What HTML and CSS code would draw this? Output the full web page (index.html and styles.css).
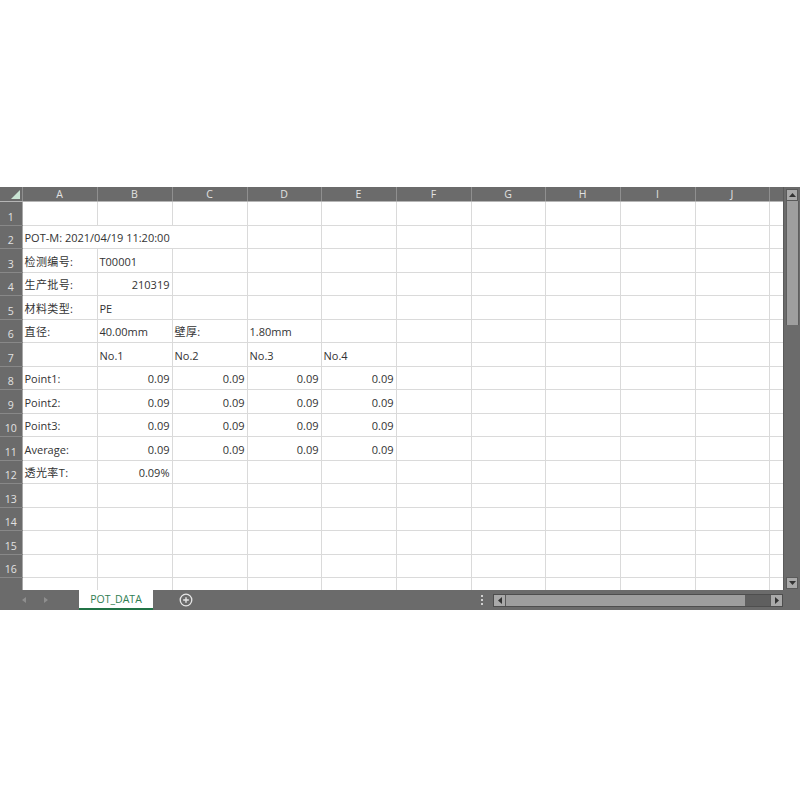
FILE: index.html
```html
<!DOCTYPE html>
<html>
<head>
<meta charset="utf-8">
<link rel="stylesheet" href="styles.css">
</head>
<body>
<div class="app">
  <div class="main">
    <div class="grid-wrap">
      <table class="sheet">
        <colgroup>
          <col class="c-rh"><col class="c75"><col class="c75"><col class="c75"><col class="c74"><col class="c75"><col class="c75"><col class="c74"><col class="c75"><col class="c75"><col class="c74"><col class="c-last">
        </colgroup>
        <thead>
          <tr class="hdr">
            <th class="corner"><svg class="tri" width="9" height="9" viewBox="0 0 9 9"><polygon points="9,0 9,9 0,9" fill="#c9e4d3"/></svg></th>
            <th>A</th><th>B</th><th>C</th><th>D</th><th>E</th><th>F</th><th>G</th><th>H</th><th>I</th><th>J</th><th></th>
          </tr>
        </thead>
        <tbody>
          <tr><th>1</th><td></td><td></td><td></td><td></td><td></td><td></td><td></td><td></td><td></td><td></td><td></td></tr>
          <tr><th>2</th><td class="over">POT-M: 2021/04/19 11:20:00</td><td class="over"></td><td></td><td></td><td></td><td></td><td></td><td></td><td></td><td></td><td></td></tr>
          <tr><th>3</th><td class="cjk">检测编号:</td><td>T00001</td><td></td><td></td><td></td><td></td><td></td><td></td><td></td><td></td><td></td></tr>
          <tr><th>4</th><td class="cjk">生产批号:</td><td class="r">210319</td><td></td><td></td><td></td><td></td><td></td><td></td><td></td><td></td><td></td></tr>
          <tr><th>5</th><td class="cjk">材料类型:</td><td>PE</td><td></td><td></td><td></td><td></td><td></td><td></td><td></td><td></td><td></td></tr>
          <tr><th>6</th><td class="cjk">直径:</td><td>40.00mm</td><td class="cjk">壁厚:</td><td>1.80mm</td><td></td><td></td><td></td><td></td><td></td><td></td><td></td></tr>
          <tr><th>7</th><td></td><td>No.1</td><td>No.2</td><td>No.3</td><td>No.4</td><td></td><td></td><td></td><td></td><td></td><td></td></tr>
          <tr><th>8</th><td>Point1:</td><td class="r">0.09</td><td class="r">0.09</td><td class="r">0.09</td><td class="r">0.09</td><td></td><td></td><td></td><td></td><td></td><td></td></tr>
          <tr><th>9</th><td>Point2:</td><td class="r">0.09</td><td class="r">0.09</td><td class="r">0.09</td><td class="r">0.09</td><td></td><td></td><td></td><td></td><td></td><td></td></tr>
          <tr><th>10</th><td>Point3:</td><td class="r">0.09</td><td class="r">0.09</td><td class="r">0.09</td><td class="r">0.09</td><td></td><td></td><td></td><td></td><td></td><td></td></tr>
          <tr><th>11</th><td>Average:</td><td class="r">0.09</td><td class="r">0.09</td><td class="r">0.09</td><td class="r">0.09</td><td></td><td></td><td></td><td></td><td></td><td></td></tr>
          <tr><th>12</th><td class="cjk">透光率T:</td><td class="r">0.09%</td><td></td><td></td><td></td><td></td><td></td><td></td><td></td><td></td><td></td></tr>
          <tr><th>13</th><td></td><td></td><td></td><td></td><td></td><td></td><td></td><td></td><td></td><td></td><td></td></tr>
          <tr><th>14</th><td></td><td></td><td></td><td></td><td></td><td></td><td></td><td></td><td></td><td></td><td></td></tr>
          <tr><th>15</th><td></td><td></td><td></td><td></td><td></td><td></td><td></td><td></td><td></td><td></td><td></td></tr>
          <tr><th>16</th><td></td><td></td><td></td><td></td><td></td><td></td><td></td><td></td><td></td><td></td><td></td></tr>
          <tr><th></th><td></td><td></td><td></td><td></td><td></td><td></td><td></td><td></td><td></td><td></td><td></td></tr>
        </tbody>
      </table>
    </div>
    <div class="vscroll">
      <div class="sbtn"><svg width="7" height="4" viewBox="0 0 7 4"><polygon points="3.5,0 7,4 0,4" fill="#333"/></svg></div>
      <div class="vthumb"></div>
      <div class="vspace"></div>
      <div class="sbtn"><svg width="7" height="4" viewBox="0 0 7 4"><polygon points="0,0 7,0 3.5,4" fill="#333"/></svg></div>
    </div>
  </div>
  <div class="tabbar">
    <div class="nav">
      <svg class="arr" width="4" height="6" viewBox="0 0 4 6"><polygon points="4,0 4,6 0,3" fill="#8e8e8e"/></svg>
      <svg class="arr" width="4" height="6" viewBox="0 0 4 6"><polygon points="0,0 4,3 0,6" fill="#8e8e8e"/></svg>
    </div>
    <div class="tab">POT_DATA</div>
    <div class="add">
      <svg width="14" height="14" viewBox="0 0 14 14"><circle cx="7" cy="7" r="5.8" fill="none" stroke="#e6e6e6" stroke-width="1.3"/><path d="M7 4.2V9.8M4.2 7H9.8" stroke="#e6e6e6" stroke-width="1.4"/></svg>
    </div>
    <div class="fill"></div>
    <div class="dots"><span></span><span></span><span></span></div>
    <div class="hscroll">
      <div class="hbtn"><svg width="4" height="7" viewBox="0 0 4 7"><polygon points="4,0 4,7 0,3.5" fill="#333"/></svg></div>
      <div class="hthumb"></div>
      <div class="hspace"></div>
      <div class="hbtn"><svg width="4" height="7" viewBox="0 0 4 7"><polygon points="0,0 4,3.5 0,7" fill="#333"/></svg></div>
    </div>
  </div>
</div>
</body>
</html>
```

FILE: styles.css
```css
html, body {
  margin: 0;
  padding: 0;
  background: #ffffff;
}

.app {
  margin-top: 187px;
  width: 800px;
  font-family: "Open Sans", "Noto Sans CJK SC", sans-serif;
}

.main {
  display: flex;
  height: 403px;
  background: #6b6b6b;
}

.grid-wrap {
  width: 783px;
  height: 403px;
  overflow: hidden;
  background: #ffffff;
}

.sheet {
  border-collapse: collapse;
  table-layout: fixed;
  width: 783px;
}

.c-rh { width: 22px; }
.c75 { width: 75px; }
.c74 { width: 74px; }
.c-last { width: 14px; }

.sheet td {
  border-right: 1px solid #dadada;
  border-bottom: 1px solid #dadada;
  padding: 0 2px 3px 2px;
  vertical-align: bottom;
  white-space: nowrap;
  overflow: visible;
  font-size: 11px;
  line-height: 14px;
  color: #333333;
}

.sheet td.r { text-align: right; }
.sheet td.cjk { font-size: 11px; letter-spacing: 0.4px; }
.sheet td.over { border-right-color: #ffffff; }

.sheet tbody tr:nth-child(odd) { height: 24px; }
.sheet tbody tr:nth-child(even) { height: 23px; }

.sheet th {
  background: #6b6b6b;
  color: #e2e2e2;
  font-weight: normal;
  font-size: 10.5px;
  padding: 0;
}

.sheet thead th {
  height: 14px;
  line-height: 13px;
  text-align: center;
  border-right: 1px solid #8f8f8f;
  border-bottom: 1px solid #b5b5b5;
}

.sheet tbody th {
  text-align: center;
  vertical-align: bottom;
  padding-bottom: 1px;
  line-height: 13px;
  border-right: 1px solid #a8a8a8;
  border-bottom: 1px solid #888888;
}

.sheet th.corner {
  position: relative;
}

.tri {
  position: absolute;
  right: 2px;
  bottom: 2px;
}

.vscroll {
  width: 17px;
  display: flex;
  flex-direction: column;
  align-items: center;
  padding: 2px 0 1px 0;
  box-sizing: border-box;
  background: #6b6b6b;
  border-left: 1px solid #5a5a5a;
}

.sbtn {
  width: 12px;
  height: 12px;
  background: #a9a9a9;
  border: 1px solid #5a5a5a;
  box-sizing: border-box;
  display: flex;
  align-items: center;
  justify-content: center;
}

.vthumb {
  width: 11px;
  height: 124px;
  background: #9e9e9e;
  border-left: 1px solid #5e5e5e;
  border-right: 1px solid #5e5e5e;
}

.vspace { flex: 1; }

.tabbar {
  display: flex;
  align-items: center;
  height: 20px;
  background: #6b6b6b;
}

.nav {
  width: 79px;
  display: flex;
  align-items: center;
  gap: 18px;
  padding-left: 22px;
  box-sizing: border-box;
}

.tab {
  width: 74px;
  height: 20px;
  box-sizing: border-box;
  background: #ffffff;
  border-bottom: 2px solid #217346;
  color: #2f7d52;
  font-size: 10.5px;
  line-height: 18px;
  text-align: center;
}

.add {
  margin-left: 26px;
  width: 14px;
  height: 14px;
  display: flex;
}

.fill { flex: 1; }

.dots {
  display: flex;
  flex-direction: column;
  gap: 2px;
  margin-right: 10px;
}

.dots span {
  display: block;
  width: 2px;
  height: 2px;
  background: #d0d0d0;
}

.hscroll {
  width: 290px;
  height: 13px;
  margin-right: 17px;
  display: flex;
  align-items: stretch;
  background: #5f5f5f;
  border: 1px solid #4e4e4e;
  box-sizing: border-box;
}

.hbtn {
  width: 11px;
  background: #a9a9a9;
  display: flex;
  align-items: center;
  justify-content: center;
  border-right: 1px solid #5a5a5a;
}

.hbtn:last-child {
  border-right: none;
  border-left: 1px solid #5a5a5a;
}

.hthumb {
  width: 239px;
  background: #9e9e9e;
}

.hspace { flex: 1; }
```
